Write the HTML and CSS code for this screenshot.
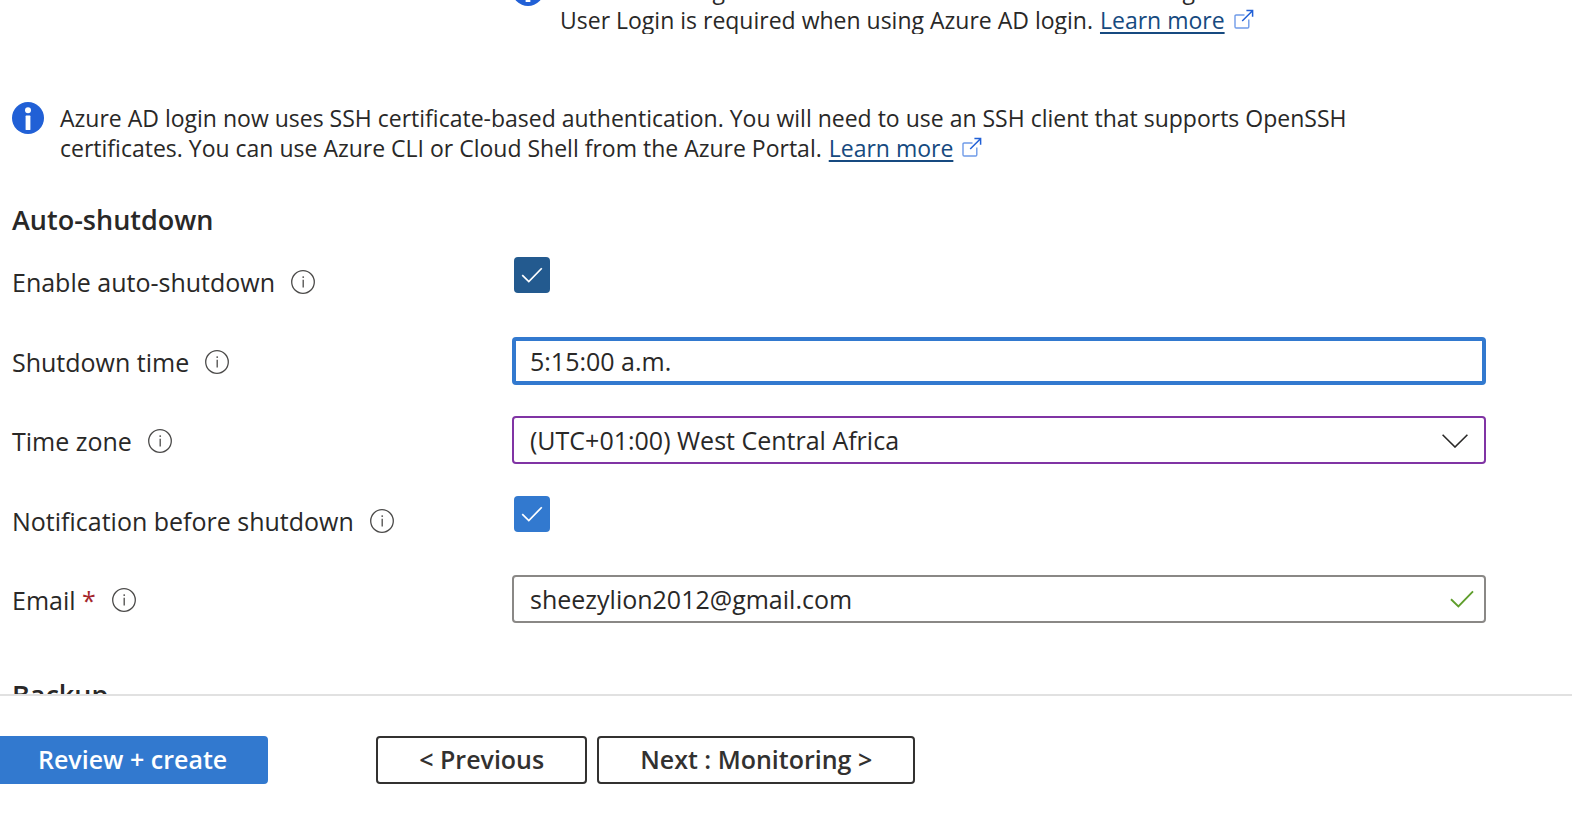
FILE: index.html
```
<!DOCTYPE html>
<html lang="en">
<head>
<meta charset="utf-8">
<meta name="viewport" content="width=device-width, initial-scale=1">
<title>Create a virtual machine</title>
<link rel="stylesheet" href="styles.css">
</head>
<body>
<svg class="sprite" aria-hidden="true">
  <symbol id="i-badge" viewBox="0 0 32 32">
    <circle cx="16" cy="16" r="16" fill="#2160d6"/>
    <circle cx="16" cy="8.2" r="3" fill="#fff"/>
    <rect x="13.6" y="13.6" width="4.8" height="14.4" rx="0.6" fill="#fff"/>
  </symbol>
  <symbol id="i-info" viewBox="0 0 24 24">
    <circle cx="12" cy="12" r="11.3" fill="none" stroke="#4c4b4a" stroke-width="1.3"/>
    <circle cx="12.2" cy="7.1" r="0.9" fill="#4c4b4a"/>
    <path d="M12.2 9.8V17.6" stroke="#4c4b4a" stroke-width="1.3"/>
  </symbol>
  <symbol id="i-external" viewBox="0 0 20 20">
    <path d="M10.5 6H2.2Q1 6 1 7.2V17.8Q1 19 2.2 19H13.6Q14.8 19 14.8 17.8V10.6" fill="none" stroke="#6f9be8" stroke-width="1.4"/>
    <path d="M8.2 12 18.5 1.7M12.4 1.5H18.6V7.7" fill="none" stroke="#2160d6" stroke-width="1.5"/>
  </symbol>
  <symbol id="i-check" viewBox="0 0 24 18">
    <path d="M1 9.2 8.4 16.4 23 1.4" fill="none" stroke="currentColor" stroke-width="1.9"/>
  </symbol>
  <symbol id="i-chevron" viewBox="0 0 26 14">
    <path d="M0.6 0.8 13 13 25.4 0.8" fill="none" stroke="currentColor" stroke-width="1.6"/>
  </symbol>
</svg>

<main class="content">
  <div class="scrolled">
    <div class="notice notice-field">
      <svg class="badge" aria-hidden="true"><use href="#i-badge"/></svg>
      <p class="notice-text">RBAC role assignment of Virtual Machine Administrator Login or Virtual Machine<br>User Login is required when using Azure AD login. <a class="link" href="#rbac">Learn more</a><svg class="external" aria-hidden="true"><use href="#i-external"/></svg></p>
    </div>

    <div class="notice notice-page">
      <svg class="badge" aria-hidden="true"><use href="#i-badge"/></svg>
      <p class="notice-text">Azure AD login now uses SSH certificate-based authentication. You will need to use an SSH client that supports OpenSSH<br>certificates. You can use Azure CLI or Cloud Shell from the Azure Portal. <a class="link" href="#ssh">Learn more</a><svg class="external" aria-hidden="true"><use href="#i-external"/></svg></p>
    </div>

    <h2 class="heading">Auto-shutdown</h2>
    <form class="form" id="shutdown-form">
      <div class="row">
        <div class="caption"><label for="enable">Enable auto-shutdown</label><svg class="info" aria-hidden="true"><use href="#i-info"/></svg></div>
        <div class="tick"><input class="box box-hover" type="checkbox" id="enable" checked><svg class="tick-mark" aria-hidden="true"><use href="#i-check"/></svg></div>
      </div>
      <div class="row">
        <div class="caption"><label for="time">Shutdown time</label><svg class="info" aria-hidden="true"><use href="#i-info"/></svg></div>
        <div class="control"><input class="field field-active" type="text" id="time" value="5:15:00 a.m."></div>
      </div>
      <div class="row">
        <div class="caption"><label for="zone">Time zone</label><svg class="info" aria-hidden="true"><use href="#i-info"/></svg></div>
        <div class="control"><select class="field field-changed" id="zone"><option>(UTC+01:00) West Central Africa</option></select><svg class="chevron" aria-hidden="true"><use href="#i-chevron"/></svg></div>
      </div>
      <div class="row">
        <div class="caption"><label for="notify">Notification before shutdown</label><svg class="info" aria-hidden="true"><use href="#i-info"/></svg></div>
        <div class="tick"><input class="box" type="checkbox" id="notify" checked><svg class="tick-mark" aria-hidden="true"><use href="#i-check"/></svg></div>
      </div>
      <div class="row">
        <div class="caption"><label for="email">Email <span class="required">*</span></label><svg class="info" aria-hidden="true"><use href="#i-info"/></svg></div>
        <div class="control"><input class="field" type="email" id="email" value="sheezylion2012@gmail.com"><svg class="valid" aria-hidden="true"><use href="#i-check"/></svg></div>
      </div>
    </form>
    <h2 class="heading">Backup</h2>
  </div>
</main>

<footer class="footer">
  <button class="button button-primary" type="button">Review + create</button>
  <button class="button" type="button">&lt; Previous</button>
  <button class="button" type="button">Next : Monitoring &gt;</button>
</footer>
</body>
</html>
```
FILE: styles.css
```
* {
  box-sizing: border-box;
}

body {
  display: flex;
  flex-direction: column;
  height: 100vh;
  margin: 0;
  background: #fff;
  color: #292827;
  font-family: "Open Sans", "Noto Sans", sans-serif;
  font-size: 25px;
}

.sprite {
  position: absolute;
  width: 0;
  height: 0;
}

.content {
  flex: 1;
  min-height: 0;
  overflow: hidden;
}

/* The form is scrolled part of the way down. */
.scrolled {
  margin-top: -26px;
  padding: 0 86px 0 12px;
}

.notice {
  display: flex;
  gap: 16px;
  height: 60px;
}

.notice-field {
  padding-left: 500px;
  overflow: hidden;
}

.notice-page {
  margin: 68px 0 18px;
}

.badge {
  flex: none;
  width: 32px;
  height: 32px;
}

.notice-text {
  margin: 0;
  padding-top: 1px;
  font-size: 23px;
  line-height: 30px;
  white-space: nowrap;
}

.link {
  margin-left: 1px;
  color: #164a80;
  text-decoration-thickness: 2px;
  text-underline-offset: 3px;
}

.external {
  width: 20px;
  height: 20px;
  margin-left: 9px;
}

.heading {
  margin: 0;
  padding-top: 20px;
  font-size: 27px;
  font-weight: 600;
  line-height: 40px;
}

.form {
  display: grid;
  grid-auto-rows: 80px 79px;
  padding-top: 17px;
}

.row {
  display: grid;
  grid-template-columns: 500px 1fr;
  align-items: start;
}

.caption {
  display: flex;
  align-items: center;
  gap: 16px;
  height: 50px;
}

.info {
  width: 24px;
  height: 24px;
}

.required {
  color: #a4262c;
}

.tick {
  position: relative;
  width: 36px;
  height: 36px;
  margin-left: 2px;
}

.box {
  display: block;
  width: 36px;
  height: 36px;
  margin: 0;
  border-radius: 4px;
  background: #3279cf;
  appearance: none;
}

.box-hover {
  background: #235a8f;
}

.tick-mark {
  position: absolute;
  top: 10px;
  left: 7px;
  width: 22px;
  height: 16px;
  color: #fff;
  pointer-events: none;
}

.control {
  position: relative;
}

.field {
  display: block;
  width: 100%;
  height: 48px;
  padding: 0 16px;
  border: 2px solid #8a8886;
  border-radius: 4px;
  background: #fff;
  color: inherit;
  font: inherit;
  appearance: none;
}

.field-active {
  padding: 0 14px;
  border: 4px solid #3279cf;
}

.field-changed {
  border-color: #8034a4;
}

.chevron {
  position: absolute;
  top: 18px;
  right: 18px;
  width: 26px;
  height: 14px;
  pointer-events: none;
}

.valid {
  position: absolute;
  top: 15px;
  right: 12px;
  width: 24px;
  height: 18px;
  color: #5f9e2c;
}

.footer {
  display: flex;
  gap: 10px;
  padding: 40px 0 34px;
  border-top: 2px solid #e1e1e1;
}

.button {
  height: 48px;
  padding: 0 41px 2px;
  border: 2px solid #323130;
  border-radius: 4px;
  background: #fff;
  color: #323130;
  font: inherit;
  font-weight: 600;
  line-height: 40px;
}

.button-primary {
  margin-right: 98px;
  padding: 0 39px 2px 36px;
  border-color: #3279cf;
  border-radius: 0 4px 4px 0;
  background: #3279cf;
  color: #fff;
}
```
